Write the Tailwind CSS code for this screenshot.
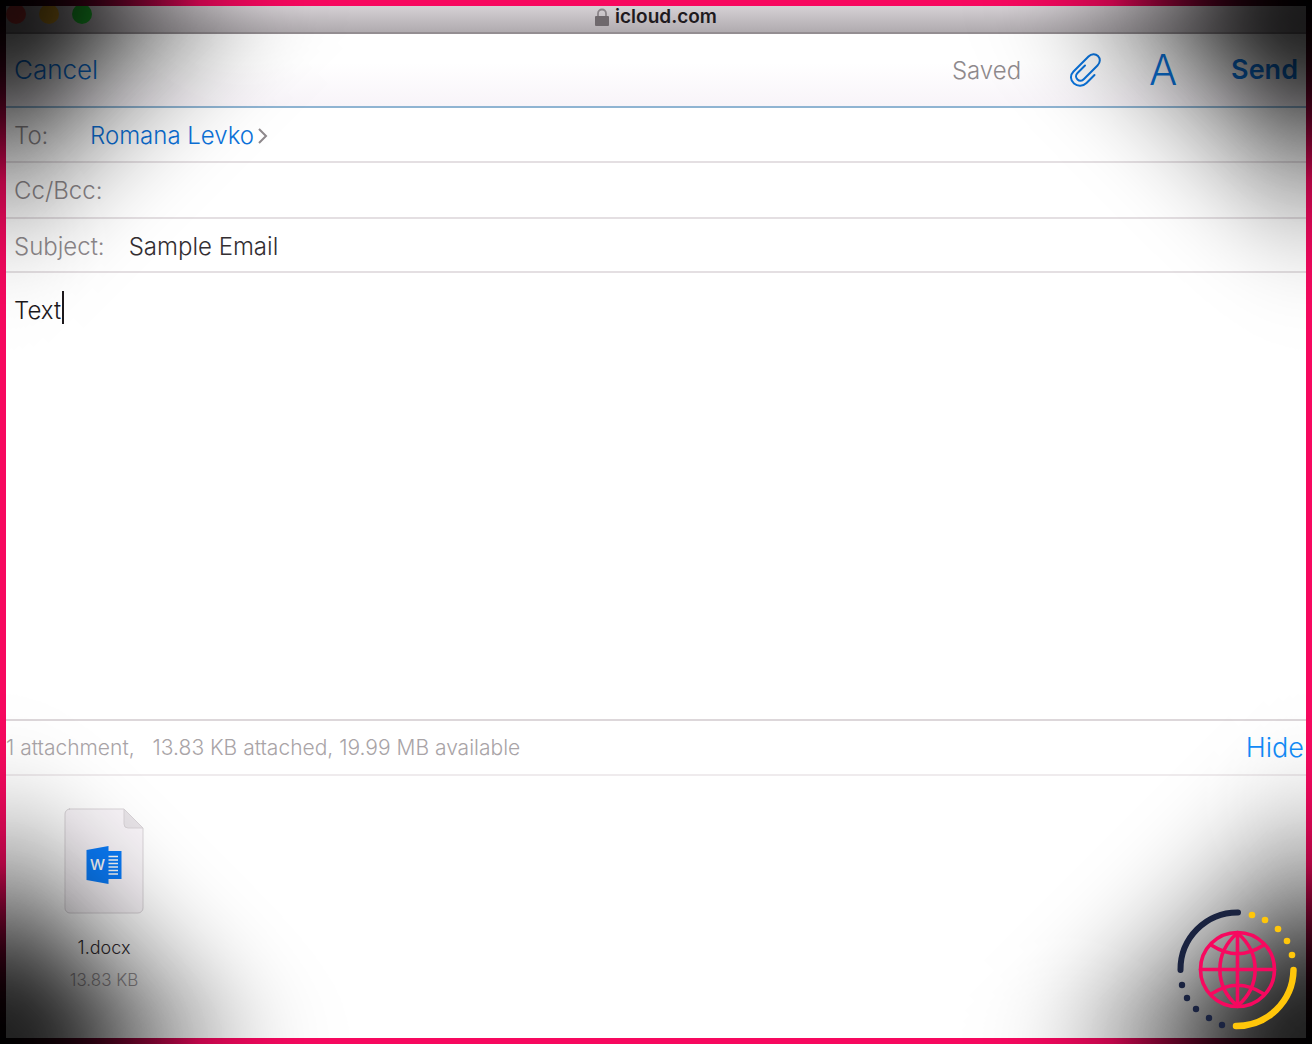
<!DOCTYPE html>
<html lang="en">
<head>
<meta charset="utf-8">
<meta name="viewport" content="width=device-width, initial-scale=1">
<title>icloud.com</title>
<script src="https://cdn.jsdelivr.net/npm/@tailwindcss/browser@4"></script>
</head>
<body class="relative flex min-h-screen flex-col bg-[#f7085f] bg-[radial-gradient(200px_180px_at_0_0,#000,#0000),radial-gradient(200px_180px_at_100%_0,#000,#0000),radial-gradient(200px_180px_at_0_100%,#000,#0000),radial-gradient(200px_180px_at_100%_100%,#000,#0000)] p-1.5 font-['Inter',sans-serif] font-light text-[#8e898c]">
<div class="flex flex-1 flex-col overflow-hidden bg-white">

  <!-- Browser title bar -->
  <header class="flex h-7 items-start justify-between border-b-2 border-[#948e92] bg-linear-to-b from-[#d6d1d5] to-[#b0abaf]">
    <div class="-mt-0.5 flex flex-1 gap-[13px]">
      <span class="size-5 rounded-full bg-[#fc4a48]"></span>
      <span class="size-5 rounded-full bg-[#fdb924]"></span>
      <span class="size-5 rounded-full bg-[#1fc52f]"></span>
    </div>
    <div class="flex items-center gap-1.5 text-[19px] leading-[22px] font-semibold text-[#1f1a1e]">
      <svg class="h-[18px] w-[14px]" viewBox="0 0 14 18" fill="none"><path d="M3 9V5.500a4 4 0 0 1 8 0V9" stroke="#8a8488" stroke-width="1.800"/><rect y="8" width="14" height="10" rx="1" fill="#6f696d"/></svg>
      <span>icloud.com</span>
    </div>
    <div class="flex-1"></div>
  </header>

  <!-- Compose toolbar -->
  <nav class="flex h-[74px] items-center border-b-2 border-[#8fb4d2] bg-linear-to-b from-white from-40% to-[#f8f4f9] pr-2 pl-2 text-[#0a74de]">
    <button type="button" class="text-[26px] leading-8">Cancel</button>
    <span class="mr-12 ml-auto pt-0.5 text-2xl text-[#8e898c]">Saved</span>
    <button type="button" aria-label="Attach file" class="mr-12">
      <svg class="h-[34px] w-8" viewBox="0 0 32 34" fill="none" stroke="currentColor" stroke-width="2" stroke-linecap="round" stroke-linejoin="round"><path d="M25.500 22 17.500 30C14 33.500 8.500 33.500 5 30.500 1 27 1 22 4.500 18.500L19.500 3.500C22.500 .5 26.500 .5 29 3 31.500 5.500 31.500 9.500 28.500 12.500L15 26C13 28 10.500 28.500 8.500 26.500 6.500 24.500 6.500 22 8.500 20L16 12.500"/></svg>
    </button>
    <button type="button" aria-label="Format text" class="mr-[54px] w-7 text-[42px] leading-8 font-[350]">A</button>
    <button type="button" class="text-[27px] leading-8 font-semibold">Send</button>
  </nav>

  <!-- Message fields -->
  <div class="flex h-[55px] items-center border-b-2 border-[#e4dfe2] pt-0.5 pl-2 text-2xl">
    <span class="w-[76px]">To:</span>
    <a href="#" class="flex items-center gap-1 text-[#0b72db]">Romana Levko
      <svg class="h-[18px] w-2.5" viewBox="0 0 10 18" fill="none" stroke="#8e898c" stroke-width="2"><path d="m1 2 7 7-7 7"/></svg>
    </a>
  </div>
  <div class="flex h-14 items-center gap-6 border-b-2 border-[#e4dfe2] pt-0.5 pl-2 text-2xl">
    <label for="cc">Cc/Bcc:</label>
    <input id="cc" type="text" class="min-w-0 flex-1 outline-none">
  </div>
  <div class="flex h-[54px] items-center gap-6 border-b-2 border-[#e4dfe2] pt-1 pl-2 text-2xl">
    <label for="subject">Subject:</label>
    <input id="subject" type="text" value="Sample Email" class="min-w-0 flex-1 font-[350] text-[#332e32] outline-none">
  </div>

  <!-- Message body -->
  <div class="relative flex min-h-40 flex-1">
    <textarea aria-label="Message" class="flex-1 resize-none pt-5 pl-2 text-2xl leading-9 font-[350] text-[#1c181b] outline-none">Text</textarea>
    <span class="absolute top-[18px] left-14 h-[33px] w-0.5 bg-[#1c181b]"></span>
  </div>

  <!-- Attachments -->
  <div class="flex h-[57px] items-center justify-between border-t-2 border-b-2 border-t-[#ddd7da] border-b-[#efebed] pr-0.5">
    <p class="text-[21px] text-[#a9a4a7]">1 attachment,<span class="ml-[18px]">13.83 KB attached, 19.99 MB available</span></p>
    <button type="button" class="text-[27px] leading-8 text-[#118cf9]">Hide</button>
  </div>
  <div class="flex h-[262px] items-start pt-8 pl-12">
    <figure class="flex w-[100px] flex-col items-center">
      <svg class="h-[106px] w-20" viewBox="0 0 80 106"><path d="M5 1H60L79 20V100a5 5 0 0 1-5 5H6a5 5 0 0 1-5-5V6a5 5 0 0 1 5-5Z" fill="#f8f4f8" stroke="#d8d3d7"/><path d="M60 1V16a4 4 0 0 0 4 4H79Z" fill="#e7e3e7" stroke="#d8d3d7"/><path d="M43 43H57.500V71H43Z" fill="#0a7cfa"/><path d="M22.500 42 44.500 38V76L22.500 72Z" fill="#0a7cfa"/><path d="M44.500 48.500H54M44.500 52H54M44.500 55.500H54M44.500 59H54M44.500 62.500H54M44.500 66H54" stroke="#fff" stroke-width="1.300"/><text x="33.500" y="62" text-anchor="middle" class="fill-white text-[15px] font-medium">W</text></svg>
      <figcaption class="mt-5 text-center text-lg leading-7 font-[350] text-[#332e32]">1.docx<small class="mt-1 block text-[17px] leading-7 font-light text-[#a09b9e]">13.83 KB</small></figcaption>
    </figure>
  </div>
</div>

<!-- Corner shading: a dense core and a wide faint halo in each corner -->
<div class="pointer-events-none absolute inset-0 overflow-hidden">
  <div class="absolute -top-[92px] -left-[92px] size-[184px] rotate-45 bg-black/80 blur-[42px]"></div>
  <div class="absolute -top-[92px] -right-[92px] size-[184px] rotate-45 bg-black/80 blur-[42px]"></div>
  <div class="absolute -bottom-[92px] -left-[92px] size-[184px] rotate-45 bg-black/80 blur-[42px]"></div>
  <div class="absolute -right-[92px] -bottom-[92px] size-[184px] rotate-45 bg-black/80 blur-[42px]"></div>
  <div class="absolute -top-[173px] -left-[173px] size-[346px] rotate-45 bg-black/42 blur-[52px]"></div>
  <div class="absolute -top-[173px] -right-[173px] size-[346px] rotate-45 bg-black/42 blur-[52px]"></div>
  <div class="absolute -bottom-[173px] -left-[173px] size-[346px] rotate-45 bg-black/42 blur-[52px]"></div>
  <div class="absolute -right-[173px] -bottom-[173px] size-[346px] rotate-45 bg-black/42 blur-[52px]"></div>
</div>

<!-- Globe badge -->
<svg class="absolute right-3.5 bottom-3.5 size-[122px]" viewBox="0 0 122 122" fill="none" stroke-linecap="round">
  <path d="M4.500 62A57 57 0 0 1 62 4.500" stroke="#1a2340" stroke-width="6"/>
  <path d="M117.500 62A57 57 0 0 1 60 118" stroke="#ffc60a" stroke-width="6.500"/>
  <g fill="#ffc60a"><circle cx="76" cy="7" r="3.300"/><circle cx="89" cy="12" r="3.300"/><circle cx="102" cy="21" r="3.300"/><circle cx="111" cy="33" r="3.300"/><circle cx="116" cy="47" r="3.300"/></g>
  <g fill="#1a2340"><circle cx="6" cy="77" r="3.200"/><circle cx="11" cy="90" r="3.200"/><circle cx="20" cy="101" r="3.200"/><circle cx="33" cy="110" r="3.200"/><circle cx="46" cy="117" r="3.200"/></g>
  <g stroke="#f7085f" stroke-width="3.600"><circle cx="61.500" cy="61.500" r="37"/><path d="M61.500 24.500v74M24.500 61.500h74M61.500 25C38 45 38 78 61.500 98M61.500 25C85 45 85 78 61.500 98M36 37.500Q61.500 54 87 37.500M36 85.500Q61.500 69 87 85.500"/></g>
</svg>
</body>
</html>
